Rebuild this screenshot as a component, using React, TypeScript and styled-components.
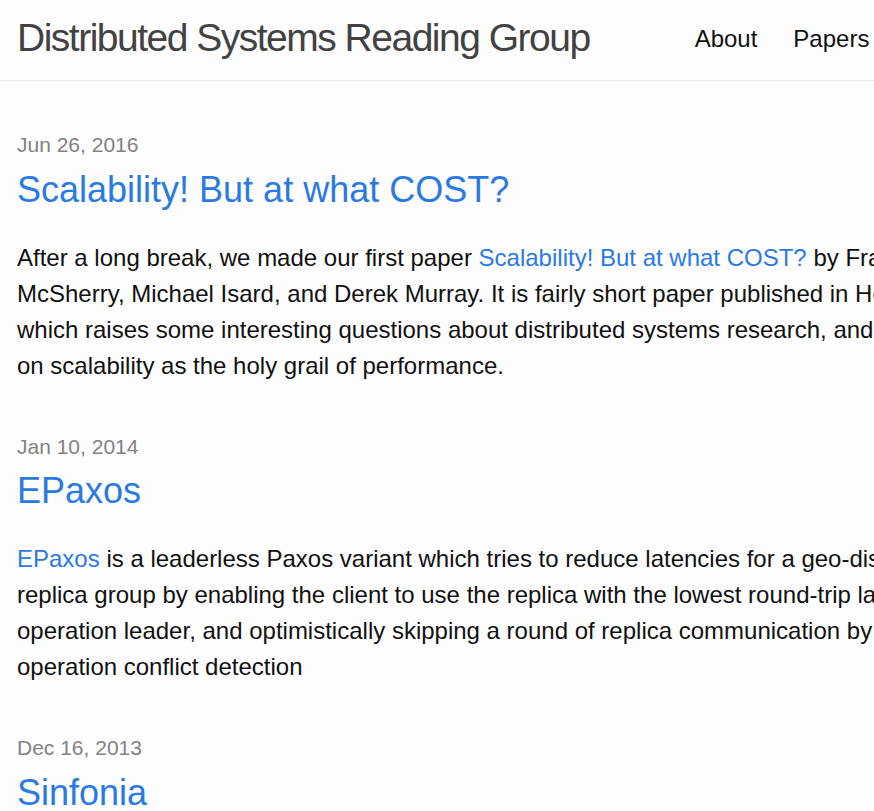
import React from "react";
import styled, { createGlobalStyle } from "styled-components";

const GlobalStyle = createGlobalStyle`
  html, body {
    margin: 0;
    padding: 0;
    overflow-x: hidden;
    background: #fdfdfd;
  }
  body {
    font-family: "Liberation Sans", Helvetica, Arial, sans-serif;
    font-size: 24px;
    line-height: 1.5;
    color: #111111;
  }
  * { box-sizing: border-box; }
`;

const SiteHeader = styled.header`
  border-bottom: 1px solid #e8e8e8;
  height: 81px;
  padding-bottom: 3px;
  display: flex;
  align-items: center;
`;

const HeaderInner = styled.div`
  display: flex;
  align-items: center;
  gap: 105px;
  padding-left: 17px;
  white-space: nowrap;
`;

const SiteTitle = styled.a`
  font-size: 39px;
  font-weight: 300;
  letter-spacing: -1.5px;
  line-height: 1.3;
  color: #424242;
  text-decoration: none;
`;

const Nav = styled.nav`
  display: flex;
  gap: 36px;
`;

const NavLink = styled.a`
  color: #111111;
  text-decoration: none;
  font-size: 24px;
  line-height: 1.5;
`;

const Main = styled.main`
  padding: 48px 0 0 17px;
`;

const Wrapper = styled.div`
  width: 979px;
`;

const PostList = styled.ul`
  list-style: none;
  margin: 0;
  padding: 0;
`;

const PostItem = styled.li`
  margin-bottom: 47px;
`;

const PostMeta = styled.span`
  display: block;
  font-size: 21px;
  line-height: 31.5px;
  color: #828282;
  margin-bottom: 2px;
`;

const PostHeading = styled.h2`
  margin: 0 0 23px;
  font-size: 36px;
  font-weight: 400;
  line-height: 54px;
`;

const PostLink = styled.a`
  display: block;
  color: #2a7ae2;
  text-decoration: none;
`;

const Excerpt = styled.p`
  margin: 0;
  font-size: 24px;
  line-height: 36px;
`;

const InlineLink = styled.a`
  color: #2a7ae2;
  text-decoration: none;
`;

type Post = {
  date: string;
  title: string;
  body: React.ReactNode;
};

const posts: Post[] = [
  {
    date: "Jun 26, 2016",
    title: "Scalability! But at what COST?",
    body: (
      <>
        After a long break, we made our first paper{" "}
        <InlineLink href="#">Scalability! But at what COST?</InlineLink> by Frank
        McSherry, Michael Isard, and Derek Murray. It is fairly short paper
        published in HotOS 2015 which raises some interesting questions about
        distributed systems research, and its focus on scalability as the holy
        grail of performance.
      </>
    ),
  },
  {
    date: "Jan 10, 2014",
    title: "EPaxos",
    body: (
      <>
        <InlineLink href="#">EPaxos</InlineLink> is a leaderless Paxos variant
        which tries to reduce latencies for a geo-distributed replica group by
        enabling the client to use the replica with the lowest round-trip latency
        as operation leader, and optimistically skipping a round of replica
        communication by using operation conflict detection
      </>
    ),
  },
  {
    date: "Dec 16, 2013",
    title: "Sinfonia",
    body: (
      <>
        Sinfonia is a service that allows hosts to share application data in a
        fault-tolerant, scalable, and consistent manner.
      </>
    ),
  },
];

export default function App() {
  return (
    <>
      <GlobalStyle />
      <SiteHeader>
        <HeaderInner>
          <SiteTitle href="#">Distributed Systems Reading Group</SiteTitle>
          <Nav>
            <NavLink href="#">About</NavLink>
            <NavLink href="#">Papers</NavLink>
          </Nav>
        </HeaderInner>
      </SiteHeader>
      <Main>
        <Wrapper>
          <PostList>
            {posts.map((p) => (
              <PostItem key={p.title}>
                <PostMeta>{p.date}</PostMeta>
                <PostHeading>
                  <PostLink href="#">{p.title}</PostLink>
                </PostHeading>
                <Excerpt>{p.body}</Excerpt>
              </PostItem>
            ))}
          </PostList>
        </Wrapper>
      </Main>
    </>
  );
}
